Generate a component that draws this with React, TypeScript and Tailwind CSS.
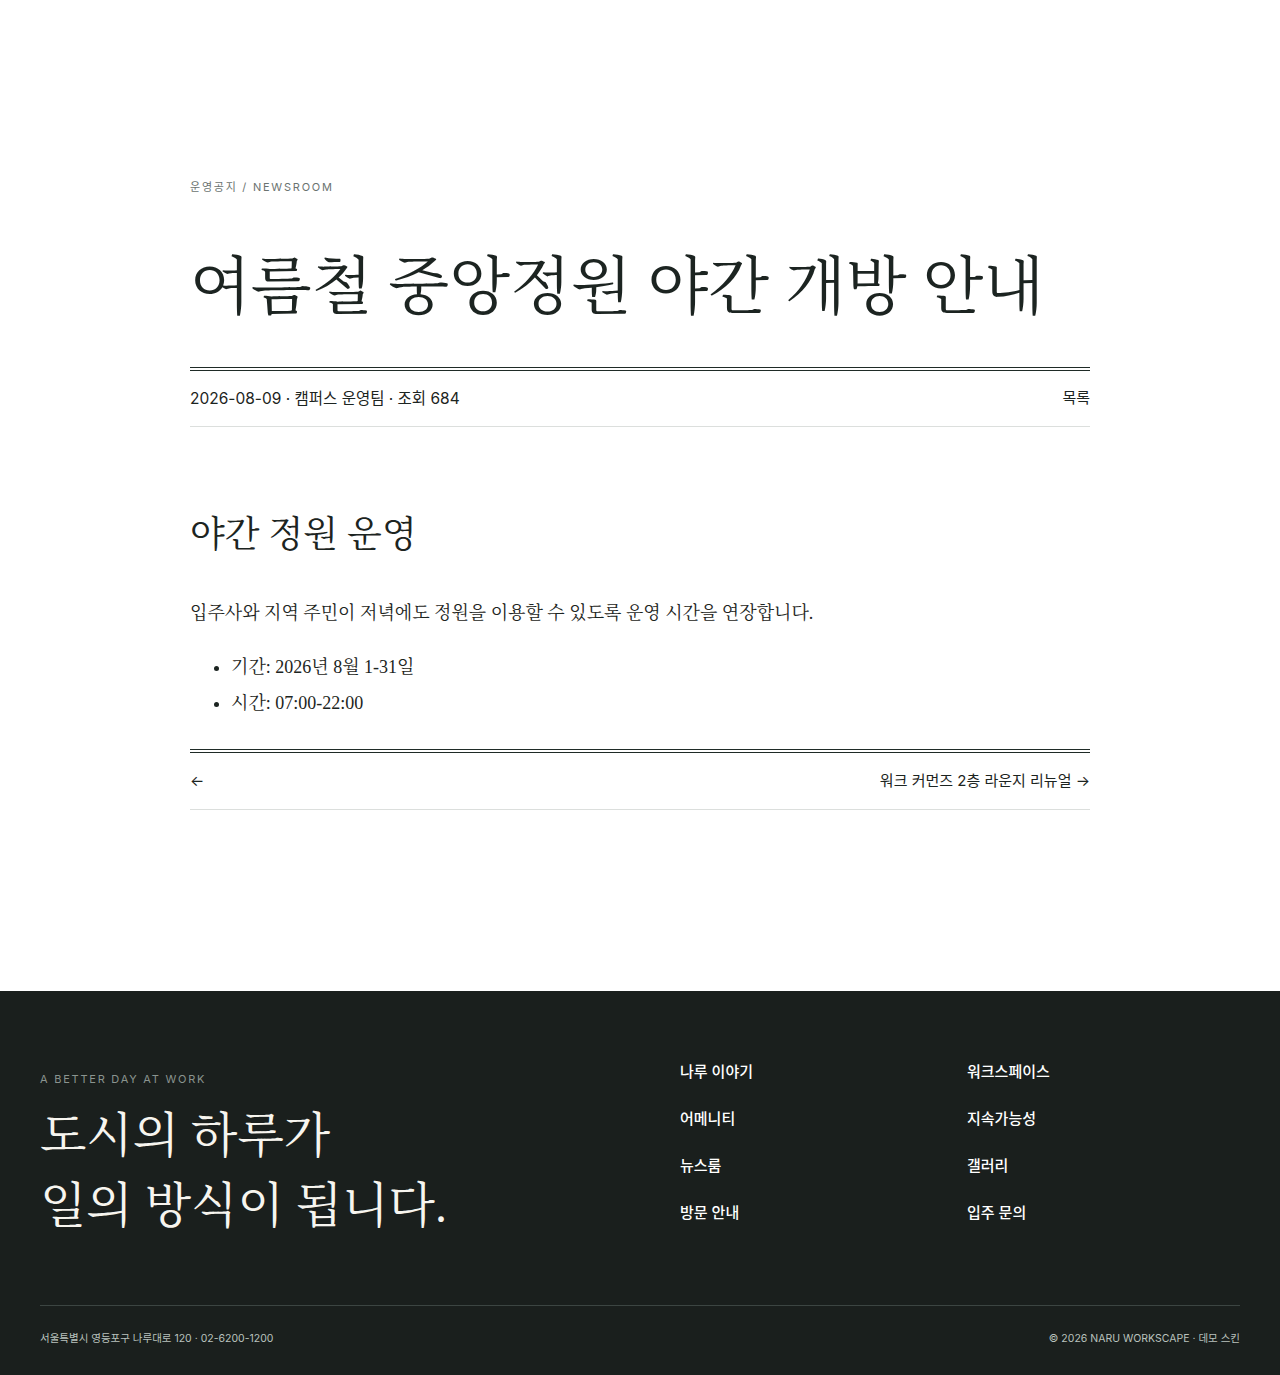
const serif = "font-['Liberation_Serif','Noto_Serif_CJK_KR',serif]";

const footerLinks = [
  ["나루 이야기", "워크스페이스"],
  ["어메니티", "지속가능성"],
  ["뉴스룸", "갤러리"],
  ["방문 안내", "입주 문의"],
];

export default function App() {
  return (
    <div className="min-h-[1375px] bg-white text-[#1c2421] font-['Inter','Noto_Sans_CJK_KR',sans-serif]">
      {/* Article */}
      <main className="mx-auto w-[900px] pt-[179px] pb-[181px]">
        <p className="text-[11px] tracking-[0.16em] text-[#6b7370] leading-4">운영공지 / NEWSROOM</p>
        <h1 className={`${serif} mt-[50px] text-[63px] leading-[84px] font-normal whitespace-nowrap`}>
          여름철 중앙정원 야간 개방 안내
        </h1>

        <div className="mt-[38px] border-t-[4px] border-double border-[#1f2b27]" />
        <div className="flex h-[56px] items-center justify-between border-b border-[#dcdfdd] text-[15.5px]">
          <span>2026-08-09 · 캠퍼스 운영팀 · 조회 684</span>
          <a className="text-[15px]">목록</a>
        </div>

        <section className={`${serif} pt-[85px] pb-[28px]`}>
          <h2 className="text-[36px] leading-[46px] font-normal">야간 정원 운영</h2>
          <p className="mt-[39px] text-[18px] leading-[32px]">
            입주사와 지역 주민이 저녁에도 정원을 이용할 수 있도록 운영 시간을 연장합니다.
          </p>
          <ul className="mt-[20px] list-disc pl-[41px] text-[18px] leading-[36px]">
            <li>기간: 2026년 8월 1-31일</li>
            <li>시간: 07:00-22:00</li>
          </ul>
        </section>

        <div className="border-t-[4px] border-double border-[#1f2b27]" />
        <div className="flex h-[57px] items-center justify-between border-b border-[#dcdfdd] text-[15px]">
          <span>←</span>
          <span>워크 커먼즈 2층 라운지 리뉴얼 →</span>
        </div>
      </main>

      {/* Footer */}
      <footer className="bg-[#1a1f1d] px-10 pt-[60px] pb-[28px] text-white">
        <div className="flex">
          <div className="w-[640px] pt-[20px]">
            <p className="text-[11px] tracking-[0.16em] text-[#8a948f] leading-4">A BETTER DAY AT WORK</p>
            <h2 className={`${serif} mt-[14px] text-[48px] leading-[70px] font-normal text-[#f7f5ef]`}>
              도시의 하루가
              <br />
              일의 방식이 됩니다.
            </h2>
          </div>
          <div className="grid flex-1 grid-cols-[287px_1fr] content-start gap-y-[23px] pt-[9px] text-[15px] font-medium leading-6">
            {footerLinks.flatMap(([a, b]) => [<a key={a}>{a}</a>, <a key={b}>{b}</a>])}
          </div>
        </div>
        <div className="mt-[64px] border-t border-[#3c4542]" />
        <div className="flex items-center justify-between pt-[25px] text-[10.5px] text-[#b9c2bd] leading-4">
          <span>서울특별시 영등포구 나루대로 120 · 02-6200-1200</span>
          <span>© 2026 NARU WORKSCAPE · 데모 스킨</span>
        </div>
      </footer>
    </div>
  );
}
